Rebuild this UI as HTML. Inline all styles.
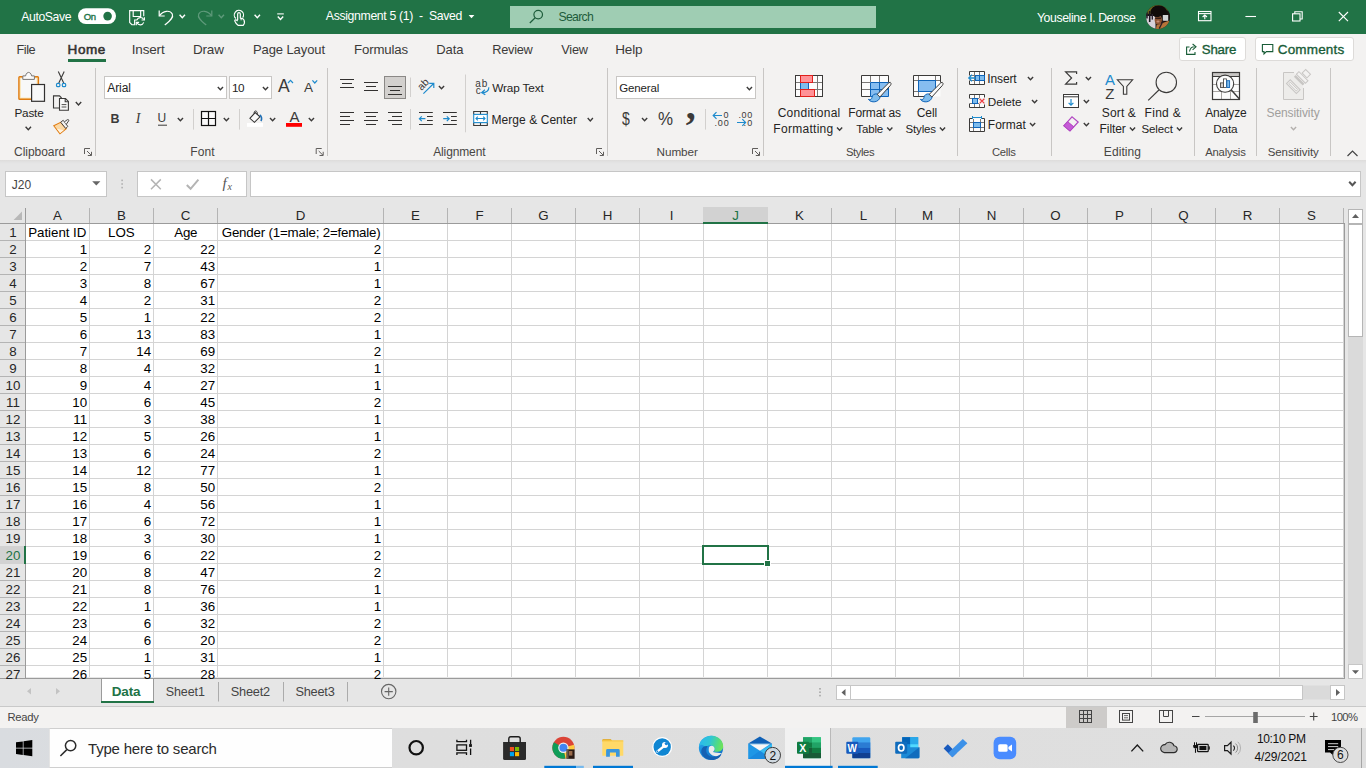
<!DOCTYPE html>
<html><head><meta charset="utf-8"><title>Assignment 5 (1) - Excel</title>
<style>
html,body{margin:0;padding:0;}
body{width:1366px;height:768px;overflow:hidden;position:relative;background:#e6e6e6;font-family:"Liberation Sans",sans-serif;}
.b{position:absolute;display:block;box-sizing:border-box;}
.t{position:absolute;white-space:pre;display:block;}
#ov{position:absolute;left:0;top:0;}
</style></head>
<body>
<div class="b" style="left:0px;top:0px;width:1366px;height:34px;background:#217346;"></div>
<div class="b" style="left:0px;top:34px;width:1366px;height:126px;background:#f3f2f1;"></div>
<div class="b" style="left:68px;top:59px;width:38px;height:3px;background:#217346;"></div>
<div class="b" style="left:1179px;top:37px;width:67px;height:24px;background:#fff;border:1px solid #dddbd9;border-radius:3px;"></div>
<div class="b" style="left:1255px;top:37px;width:99px;height:24px;background:#fff;border:1px solid #dddbd9;border-radius:3px;"></div>
<div class="b" style="left:0px;top:160px;width:1366px;height:4px;background:linear-gradient(#dddcdb,#e2e2e2 50%,#e6e6e6);"></div>
<div class="b" style="left:26px;top:224px;width:1318px;height:453px;background:#fff;"></div>
<div class="b" style="left:0px;top:207px;width:1344px;height:17px;background:#e6e6e6;"></div>
<div class="b" style="left:0px;top:224px;width:25px;height:453px;background:#e6e6e6;"></div>
<div class="b" style="left:1348px;top:224px;width:15px;height:441px;background:#dadada;"></div>
<div class="b" style="left:0px;top:679px;width:1366px;height:27px;background:#e6e6e6;"></div>
<div class="b" style="left:0px;top:706px;width:1366px;height:1px;background:#c9c9c9;"></div>
<div class="b" style="left:0px;top:707px;width:1366px;height:21px;background:#f3f2f1;"></div>
<div class="b" style="left:100.5px;top:677.5px;width:53.5px;height:24px;background:#fff;border-left:1px solid #9b9b9b;border-right:1px solid #9b9b9b;"></div>
<div class="b" style="left:100.5px;top:701px;width:53.5px;height:2px;background:#217346;"></div>
<div class="b" style="left:1066px;top:707px;width:40.5px;height:21px;background:#cdcbc9;"></div>
<div class="b" style="left:0px;top:728px;width:1366px;height:40px;background:linear-gradient(90deg,#d9dce0 0,#dedede 30%,#dfdfdf 100%);"></div>
<div class="b" style="left:49px;top:728px;width:342.5px;height:40px;background:#fefefe;border-top:1px solid #cfcfcf;border-bottom:1px solid #cfcfcf;border-left:1px solid #e4e4e4;"></div>
<div class="b" style="left:785px;top:728px;width:45.5px;height:40px;background:#f1f1f1;"></div>
<div class="b" style="left:830px;top:728px;width:1px;height:40px;background:#b9b9b9;"></div>
<svg id="ov" width="1366" height="768" viewBox="0 0 1366 768">
<rect x="78" y="8.2" width="38" height="15.8" rx="7.9" fill="#fff"/>
<circle cx="107.6" cy="16.1" r="4.3" fill="#217346"/>
<g transform="translate(10,0) scale(0.1098)" fill="none" stroke="#fff" stroke-width="10.5"><path d="M1218 148 V97 H1090 V205 L1110 225 H1140"/><path d="M1122 97 V150 H1190 V97"/><path d="M1135 225 V182 H1158"/><path d="M1156 182 A34 34 0 0 1 1218 178"/><path d="M1224 156 V182 H1198"/><path d="M1218 204 A34 34 0 0 1 1156 208"/><path d="M1150 230 V204 H1176"/></g>
<g fill="none" stroke="#fff" stroke-width="1.2"><path d="M159.2 10.5 V16 H164.7"/><path d="M159.6 15.6 C163 10.5 170 9.8 172.3 14 C174 18 169 21.5 164.8 25"/></g>
<path d="M179.60 14.85 L182.30 17.75 L185.00 14.85" fill="none" stroke="#fff" stroke-width="1.4" stroke-linecap="butt"/>
<g fill="none" stroke="#5f9a7b" stroke-width="1.2"><path d="M211.8 10.5 V16 H206.3"/><path d="M211.4 15.6 C208 10.5 201 9.8 198.7 14 C197 18 202 21.5 206.2 25"/></g>
<path d="M218.60 14.85 L221.30 17.75 L224.00 14.85" fill="none" stroke="#5f9a7b" stroke-width="1.4" stroke-linecap="butt"/>
<g transform="translate(120,0) scale(0.13177)" fill="none" stroke="#fff" stroke-width="9"><path d="M879 140 A35 35 0 1 1 931 134"/><path d="M893 152 V106 A10 10 0 0 1 913 106 V140"/><path d="M913 141 C926 138 936 143 941 152 C947 166 945 181 935 192 H896 C886 185 876 171 872 161 C868 150 880 147 893 159"/><path d="M914 150 H927" stroke-width="6"/></g>
<path d="M254.60 14.85 L257.30 17.75 L260.00 14.85" fill="none" stroke="#fff" stroke-width="1.4" stroke-linecap="butt"/>
<path d="M277.2 13.9 H283.8" stroke="#fff" stroke-width="1.1"/>
<path d="M277.80 16.55 L280.50 19.45 L283.20 16.55" fill="none" stroke="#fff" stroke-width="1.4" stroke-linecap="butt"/>
<path d="M468.6 15 L474.4 15 L471.5 18.2 Z" fill="#fff"/>
<rect x="510" y="6" width="366" height="22" fill="#9fcdb3"/>
<g fill="none" stroke="#1e5c3b" stroke-width="1.2"><circle cx="538.2" cy="14.6" r="4.3"/><path d="M535.2 17.8 L529.8 23"/></g>
<defs><clipPath id="avc"><circle cx="1158" cy="17.05" r="11.9"/></clipPath></defs>
<g clip-path="url(#avc)"><rect x="1145" y="4" width="26" height="26" fill="#17100e"/><path d="M1146 13 A12 12 0 0 1 1168 9 L1166 14 L1149 14 Z" fill="#6f6a20"/><ellipse cx="1158.8" cy="12.4" rx="8.3" ry="7.2" fill="#110b0a"/><rect x="1145" y="16" width="10.5" height="14" fill="#d5d0d8"/><rect x="1145.8" y="12" width="2" height="6.5" fill="#2a222c"/><rect x="1148.9" y="11" width="1.6" height="11" fill="#1f1722"/><rect x="1151.6" y="14" width="1.4" height="5.6" fill="#2a2230"/><rect x="1162.8" y="15" width="6.2" height="5.8" fill="#d4d4d6"/><rect x="1168.2" y="11" width="3" height="11" fill="#1a1412"/><path d="M1161 23.4 L1168.8 20.8 L1171 31 H1155.5 L1156.6 25 Z" fill="#b57339"/><ellipse cx="1158.3" cy="20" rx="3.7" ry="4.8" fill="#8c5333"/><rect x="1155.2" y="17.6" width="5.8" height="1.3" fill="#2f1a14"/><ellipse cx="1158" cy="21.6" rx="1.6" ry="1" fill="#c98a72"/><ellipse cx="1157" cy="15.4" rx="3.2" ry="1.6" fill="#110b0a"/><path d="M1163.2 20.8 L1159.2 28.6" stroke="#2a1c26" stroke-width="1.3"/></g>
<g fill="none" stroke="#fff" stroke-width="1.1"><rect x="1198.5" y="11.5" width="12.5" height="9.2"/><path d="M1198.5 13.6 H1211"/><path d="M1204.8 19.2 V15.4 M1202.6 17 L1204.8 15 L1207 17"/></g>
<path d="M1245.4 16.5 H1256" stroke="#fff" stroke-width="1.1"/>
<g fill="none" stroke="#fff" stroke-width="1.1"><rect x="1292.6" y="13.8" width="7.4" height="7.2"/><path d="M1294.8 13.8 V11.8 H1302.2 V19 H1300"/></g>
<path d="M1338.8 12 L1348 21.2 M1348 12 L1338.8 21.2" stroke="#fff" stroke-width="1.1"/>
<g fill="none" stroke="#185c37" stroke-width="1.1"><path d="M1189.5 47 H1186.6 V54.4 H1195 V52"/><path d="M1189.5 51.5 C1190 48.5 1192 46.8 1194.5 46.8 M1192.6 44 L1196 46.8 L1192.6 49.8"/></g>
<path d="M1262.4 44.5 H1272.8 V51.6 H1266.4 L1264 54 V51.6 H1262.4 Z" fill="none" stroke="#185c37" stroke-width="1.1"/>
<path d="M95.5 68 V156" stroke="#c8c6c4" stroke-width="1"/>
<path d="M327.5 68 V156" stroke="#c8c6c4" stroke-width="1"/>
<path d="M607.5 68 V156" stroke="#c8c6c4" stroke-width="1"/>
<path d="M763.5 68 V156" stroke="#c8c6c4" stroke-width="1"/>
<path d="M957.5 68 V156" stroke="#c8c6c4" stroke-width="1"/>
<path d="M1051.5 68 V156" stroke="#c8c6c4" stroke-width="1"/>
<path d="M1194.5 68 V156" stroke="#c8c6c4" stroke-width="1"/>
<path d="M1256.5 68 V156" stroke="#c8c6c4" stroke-width="1"/>
<path d="M1330.5 68 V156" stroke="#c8c6c4" stroke-width="1"/>
<g fill="none" stroke="#605e5c" stroke-width="1"><path d="M84.5 154 V148.5 H90"/><path d="M87 151 L91.3 155.3 M91.5 151.8 V155.5 H87.8"/></g>
<g fill="none" stroke="#605e5c" stroke-width="1"><path d="M316.2 154 V148.5 H321.7"/><path d="M318.7 151 L323.0 155.3 M323.2 151.8 V155.5 H319.5"/></g>
<g fill="none" stroke="#605e5c" stroke-width="1"><path d="M596.5 154 V148.5 H602"/><path d="M599 151 L603.3 155.3 M603.5 151.8 V155.5 H599.8"/></g>
<g fill="none" stroke="#605e5c" stroke-width="1"><path d="M752.5 154 V148.5 H758"/><path d="M755 151 L759.3 155.3 M759.5 151.8 V155.5 H755.8"/></g>
<path d="M1347.5 156 L1352.5 151 L1357.5 156" fill="none" stroke="#444" stroke-width="1.2"/>
<rect x="18.9" y="76.7" width="19.5" height="22.6" rx="0.8" fill="#fbe3ae" stroke="#e07c12" stroke-width="1.4"/><rect x="20.8" y="78.4" width="15.8" height="19.2" fill="#f8f8f8"/>
<path d="M22.8 79.4 V75.9 H25.6 C26 73 28 72.4 28.6 72.4 C29.2 72.4 31.2 73 31.6 75.9 H34.4 V79.4 Z" fill="#fafafa" stroke="#797775" stroke-width="1"/>
<rect x="31.6" y="84.5" width="12.9" height="16.8" fill="#f8f8f8" stroke="#323130" stroke-width="1.2"/>
<path d="M25.60 126.75 L28.30 129.65 L31.00 126.75" fill="none" stroke="#3b3a39" stroke-width="1.4" stroke-linecap="butt"/>
<g fill="none"><path d="M58.3 71.6 L63.7 83 M64.2 71.6 L58.8 83" stroke="#3b3a39" stroke-width="1.1"/><rect x="56.5" y="83.4" width="3.4" height="3.3" rx="1.3" stroke="#1e8bcd" stroke-width="1.2"/><rect x="62.3" y="83.4" width="3.4" height="3.3" rx="1.3" stroke="#1e8bcd" stroke-width="1.2"/></g>
<g fill="none" stroke="#3b3a39" stroke-width="1.1"><path d="M59.4 108 H53.5 V95.9 H59.5 L61.6 98"/><path d="M59.5 98.5 H65.5 L68.4 101.4 V110.3 H59.5 Z" fill="#f8f8f8"/><path d="M65.2 98.7 V101.7 H68.2"/><path d="M61.6 104.6 H66.4 M61.6 107 H66.4" stroke-width="0.9"/></g>
<path d="M75.80 102.05 L78.50 104.95 L81.20 102.05" fill="none" stroke="#3b3a39" stroke-width="1.4" stroke-linecap="butt"/>
<g transform="translate(10,66) scale(0.09112)"><path d="M480 655 L556 618 L618 688 L548 745 Z" fill="#fbd9a5" stroke="#e07c12" stroke-width="11"/><path d="M515 688 L590 704 L550 735 Z" fill="#fdf3e2"/><path d="M556 617 L584 596 L634 662 L612 686 Z" fill="#f3f2f1" stroke="#3b3a39" stroke-width="10"/><path d="M598 612 L630 589 Q646 584 645 600 L618 640" fill="#f3f2f1" stroke="#3b3a39" stroke-width="10"/></g>
<rect x="104.5" y="76.5" width="122" height="22" fill="#fff" stroke="#c8c6c4" stroke-width="1"/>
<rect x="229.5" y="76.5" width="42" height="22" fill="#fff" stroke="#c8c6c4" stroke-width="1"/>
<path d="M217.80 87.00 L220.40 89.80 L223.00 87.00" fill="none" stroke="#3b3a39" stroke-width="1.4" stroke-linecap="butt"/>
<path d="M262.90 87.00 L265.50 89.80 L268.10 87.00" fill="none" stroke="#3b3a39" stroke-width="1.4" stroke-linecap="butt"/>
<path d="M288 83 L290.5 80.4 L293 83" fill="none" stroke="#1e8bcd" stroke-width="1.2"/>
<path d="M312.4 80.4 L314.8 83 L317.2 80.4" fill="none" stroke="#1e8bcd" stroke-width="1.2"/>
<path d="M158 125.2 H167" stroke="#3b3a39" stroke-width="1"/>
<path d="M177.80 117.90 L180.40 120.70 L183.00 117.90" fill="none" stroke="#3b3a39" stroke-width="1.4" stroke-linecap="butt"/>
<path d="M193.5 109 V129.6" stroke="#d2d0ce" stroke-width="1"/>
<g fill="none" stroke="#111" stroke-width="1.2"><rect x="201.5" y="111.5" width="14" height="14" fill="#fafafa"/><path d="M208.5 111.5 V125.5 M201.5 118.5 H215.5"/></g>
<path d="M223.80 117.90 L226.40 120.70 L229.00 117.90" fill="none" stroke="#3b3a39" stroke-width="1.4" stroke-linecap="butt"/>
<path d="M239.5 109 V129.6" stroke="#d2d0ce" stroke-width="1"/>
<g transform="translate(196,104) scale(0.09517)"><path d="M566 150 L622 90 L672 134 L614 192 Z" fill="#fafafa" stroke="#323130" stroke-width="11"/><path d="M612 104 C606 78 622 68 634 76 C644 82 646 96 644 108" fill="none" stroke="#323130" stroke-width="10"/><path d="M670 116 C692 130 694 160 682 178" fill="none" stroke="#1f6fb5" stroke-width="17"/></g>
<rect x="247" y="123" width="16" height="3.8" fill="#ffffff"/>
<path d="M270.00 117.90 L272.60 120.70 L275.20 117.90" fill="none" stroke="#3b3a39" stroke-width="1.4" stroke-linecap="butt"/>
<rect x="286" y="123" width="16" height="3.8" fill="#ff0000"/>
<path d="M308.80 117.90 L311.40 120.70 L314.00 117.90" fill="none" stroke="#3b3a39" stroke-width="1.4" stroke-linecap="butt"/>
<path d="M340.0 79.5 H354.0 M342.0 83.5 H352.0 M340.0 87.5 H354.0 " stroke="#323130" stroke-width="1" fill="none"/>
<path d="M364.0 82.5 H378.0 M366.0 86.5 H376.0 M364.0 90.5 H378.0 " stroke="#323130" stroke-width="1" fill="none"/>
<rect x="384.5" y="76.5" width="21" height="22" fill="#d2d0ce" stroke="#8a8886" stroke-width="1"/>
<path d="M388.0 86.5 H402.0 M390.0 90.5 H400.0 M388.0 94.5 H402.0 " stroke="#323130" stroke-width="1" fill="none"/>
<path d="M410.5 77.5 V97" stroke="#d2d0ce" stroke-width="1"/>
<g><text x="0" y="0" transform="translate(421.4,91) rotate(-45)" font-size="10.5" fill="#3b3a39" font-family="Liberation Sans, sans-serif">ab</text><path d="M423.4 93.6 L433.4 83.8 M429.2 83.4 H433.8 V88" fill="none" stroke="#1e8bcd" stroke-width="1.2"/></g>
<path d="M438.90 86.00 L441.50 88.80 L444.10 86.00" fill="none" stroke="#3b3a39" stroke-width="1.4" stroke-linecap="butt"/>
<path d="M465.5 74.5 V132.3" stroke="#d2d0ce" stroke-width="1"/>
<path d="M340.0 112.5 H354.0 M340.0 116.5 H350.0 M340.0 120.5 H354.0 M340.0 124.5 H350.0 " stroke="#323130" stroke-width="1" fill="none"/>
<path d="M364.0 112.5 H378.0 M366.0 116.5 H376.0 M364.0 120.5 H378.0 M366.0 124.5 H376.0 " stroke="#323130" stroke-width="1" fill="none"/>
<path d="M388.0 112.5 H402.0 M392.0 116.5 H402.0 M388.0 120.5 H402.0 M392.0 124.5 H402.0 " stroke="#323130" stroke-width="1" fill="none"/>
<path d="M410.5 109 V129.6" stroke="#d2d0ce" stroke-width="1"/>
<path d="M419.0 112.5 H432.8 M427.0 116.5 H432.8 M427.0 120.5 H432.8 M419.0 124.5 H432.8 " stroke="#323130" stroke-width="1" fill="none"/>
<path d="M419.4 118.7 H425.4 M421.8 116.3 L419.4 118.7 L421.8 121.1" fill="none" stroke="#1e8bcd" stroke-width="1.2"/>
<path d="M443.0 112.5 H456.8 M451.0 116.5 H456.8 M451.0 120.5 H456.8 M443.0 124.5 H456.8 " stroke="#323130" stroke-width="1" fill="none"/>
<path d="M443.2 118.7 H449.2 M446.8 116.3 L449.2 118.7 L446.8 121.1" fill="none" stroke="#1e8bcd" stroke-width="1.2"/>
<path d="M488.8 87.3 C489.2 90.6 486.2 92.5 482 92.6 M484.9 89.8 L481.7 92.6 L485.3 94.8" fill="none" stroke="#1e8bcd" stroke-width="1.2"/>
<g fill="none" stroke-width="1.1"><path d="M473.7 114.4 V111.5 H487.3 V114.4 M480.5 111.5 V114.4 M473.7 122.6 V125.5 H487.3 V122.6 M480.5 122.6 V125.5" stroke="#3b3a39"/><rect x="473.7" y="114.4" width="13.6" height="8.2" stroke="#1e8bcd" fill="#fff"/><path d="M476 118.5 H485 M477.8 116.7 L476 118.5 L477.8 120.3 M483.2 116.7 L485 118.5 L483.2 120.3" stroke="#1e8bcd"/></g>
<path d="M587.70 118.10 L590.30 120.90 L592.90 118.10" fill="none" stroke="#3b3a39" stroke-width="1.4" stroke-linecap="butt"/>
<rect x="616.5" y="76.5" width="139" height="22" fill="#fff" stroke="#c8c6c4" stroke-width="1"/>
<path d="M746.80 87.00 L749.40 89.80 L752.00 87.00" fill="none" stroke="#3b3a39" stroke-width="1.4" stroke-linecap="butt"/>
<path d="M642.00 117.90 L644.60 120.70 L647.20 117.90" fill="none" stroke="#3b3a39" stroke-width="1.4" stroke-linecap="butt"/>
<path d="M705.5 109 V129.6" stroke="#d2d0ce" stroke-width="1"/>
<path d="M713.2 115.5 H722 M716.5 112.2 L713.2 115.5 L716.5 118.8" fill="none" stroke="#1e8bcd" stroke-width="1.2"/>
<path d="M737 122.5 H745.6 M742.3 119.2 L745.6 122.5 L742.3 125.8" fill="none" stroke="#1e8bcd" stroke-width="1.2"/>
<rect x="795.5" y="75.5" width="27" height="21" fill="#fcfcfc"/><path d="M796 82.5 H822 M796 89.5 H822 M817.5 76 V96" stroke="#7a7876" stroke-width="1" fill="none"/><rect x="795.5" y="75.5" width="27" height="21" fill="none" stroke="#3b3a39" stroke-width="1"/><rect x="800.5" y="82.5" width="8" height="7" fill="#7fbcec" stroke="#0f64b9" stroke-width="1"/><rect x="800.5" y="75.5" width="12" height="7" fill="#ff9297" stroke="#e0201c" stroke-width="1"/><rect x="800.5" y="89.5" width="14" height="7" fill="#ff9297" stroke="#e0201c" stroke-width="1"/>
<path d="M837.00 127.40 L839.60 130.20 L842.20 127.40" fill="none" stroke="#3b3a39" stroke-width="1.4" stroke-linecap="butt"/>
<rect x="861.5" y="75.5" width="27" height="21" fill="#fcfcfc"/><rect x="870.5" y="82.5" width="18" height="14" fill="#86bdf0"/><path d="M862 82.5 H870 M862 89.5 H870 M870.5 76 V82 M879.5 76 V82" stroke="#7a7876" stroke-width="1" fill="none"/><path d="M888.5 82.5 V75.5 H861.5 V96.5 H870.5" stroke="#3b3a39" stroke-width="1" fill="none"/><path d="M870.5 82.5 H888.5 V96.5 H870.5 Z M879.5 82.5 V96.5 M870.5 89.5 H888.5" fill="none" stroke="#0f64b9" stroke-width="1"/><path d="M868.4 99.4 C871.0 103.2 879.2 102.8 880.2 96.6 L877.4 94 C874.2 93.4 872.2 95.2 872.0 97.4 C871.8 99.4 870.4 100 868.4 99.4 Z" fill="#7fbcec" stroke="#0f64b9" stroke-width="1"/><path d="M877.2 94.4 L888.8 82.8 Q890.6 81.6 891.0 83.4 Q891.0 84.6 890.4 85.4 L879.9 97 Z" fill="#fafafa" stroke="#3b3a39" stroke-width="1"/>
<path d="M887.20 127.40 L889.80 130.20 L892.40 127.40" fill="none" stroke="#3b3a39" stroke-width="1.4" stroke-linecap="butt"/>
<rect x="913.5" y="75.5" width="27" height="21" fill="#fcfcfc"/><path d="M914 80.5 H940 M914 91.5 H918 M918.5 76 V96 M935.5 76 V80" stroke="#7a7876" stroke-width="1" fill="none"/><path d="M940.5 82.5 V75.5 H913.5 V96.5 H924" stroke="#3b3a39" stroke-width="1" fill="none"/><rect x="918.5" y="80.5" width="17" height="11" fill="#86bdf0" stroke="#0f64b9" stroke-width="1"/><path d="M920.4 99.4 C923.0 103.2 931.2 102.8 932.2 96.6 L929.4 94 C926.2 93.4 924.2 95.2 924.0 97.4 C923.8 99.4 922.4 100 920.4 99.4 Z" fill="#7fbcec" stroke="#0f64b9" stroke-width="1"/><path d="M929.2 94.4 L940.8 82.8 Q942.6 81.6 943.0 83.4 Q943.0 84.6 942.4 85.4 L931.9 97 Z" fill="#fafafa" stroke="#3b3a39" stroke-width="1"/>
<path d="M939.90 127.40 L942.50 130.20 L945.10 127.40" fill="none" stroke="#3b3a39" stroke-width="1.4" stroke-linecap="butt"/>
<rect x="969.5" y="71.5" width="15" height="13" fill="#fcfcfc"/><path d="M970 75.5 H984 M970 80.5 H984 M974.5 72 V84 M979.5 72 V84" stroke="#7a7876" stroke-width="1" fill="none"/><path d="M969.5 75.5 V71.5 H984.5 V84.5 H969.5 V80.5" stroke="#3b3a39" stroke-width="1" fill="none"/><rect x="975.5" y="75.5" width="9" height="5" fill="#7fbcec" stroke="#0f64b9" stroke-width="1"/><path d="M979.5 75.5 V80.5" stroke="#0f64b9" stroke-width="1"/><path d="M968.8 78 H975.5 M972 74.8 L968.8 78 L972 81.2" fill="none" stroke="#1e8bcd" stroke-width="1.3"/>
<path d="M1027.90 77.00 L1030.50 79.80 L1033.10 77.00" fill="none" stroke="#3b3a39" stroke-width="1.4" stroke-linecap="butt"/>
<rect x="969.5" y="94.5" width="15" height="13" fill="#fcfcfc"/><path d="M970 98.5 H979 M970 103.5 H979 M974.5 95 V107 M979.5 95 V98 M979.5 104 V107" stroke="#7a7876" stroke-width="1" fill="none"/><path d="M969.5 98.5 V94.5 H984.5 V97.5 M984.5 104.5 V107.5 H969.5 V103.5" stroke="#3b3a39" stroke-width="1" fill="none"/><rect x="979" y="98" width="7" height="6" fill="#f3f2f1"/><rect x="972.5" y="98.5" width="5" height="5" fill="#7fbcec" stroke="#0f64b9" stroke-width="1"/><path d="M979.6 98.8 L984.4 103.4 M984.4 98.8 L979.6 103.4" stroke="#ee3d43" stroke-width="1.2"/>
<path d="M1032.00 99.90 L1034.60 102.70 L1037.20 99.90" fill="none" stroke="#3b3a39" stroke-width="1.4" stroke-linecap="butt"/>
<rect x="969.5" y="118.5" width="15" height="13" fill="#fcfcfc"/><path d="M970 122.5 H984 M970 127.5 H984 M973.5 119 V131 M980.5 119 V131" stroke="#7a7876" stroke-width="1" fill="none"/><path d="M972 118.5 H969.5 V131.5 H984.5 V118.5 H982" stroke="#3b3a39" stroke-width="1" fill="none"/><rect x="973.5" y="122.5" width="7" height="5" fill="#7fbcec" stroke="#0f64b9" stroke-width="1"/><path d="M972.5 117.5 H981.5 M972.5 116 V119 M981.5 116 V119" stroke="#1e8bcd" stroke-width="1" fill="none"/>
<path d="M1030.00 123.00 L1032.60 125.80 L1035.20 123.00" fill="none" stroke="#3b3a39" stroke-width="1.4" stroke-linecap="butt"/>
<path d="M1076.6 74 V71.8 H1065.6 L1071.6 78 L1065.6 84.2 H1076.6 V82" fill="none" stroke="#3b3a39" stroke-width="1.2"/>
<path d="M1085.80 77.00 L1088.40 79.80 L1091.00 77.00" fill="none" stroke="#3b3a39" stroke-width="1.4" stroke-linecap="butt"/>
<rect x="1063.5" y="94.5" width="15" height="13" fill="#fff" stroke="#3b3a39" stroke-width="1"/><path d="M1063.5 96.8 H1078.5" stroke="#3b3a39" stroke-width="1"/><path d="M1071 99 V105 M1068.6 102.8 L1071 105.2 L1073.4 102.8" fill="none" stroke="#1e8bcd" stroke-width="1.2"/>
<path d="M1083.80 99.90 L1086.40 102.70 L1089.00 99.90" fill="none" stroke="#3b3a39" stroke-width="1.4" stroke-linecap="butt"/>
<path d="M1063.8 125.8 L1072 116.8 L1078.2 122 L1070 131 Z" fill="#f3f2f1" stroke="#b146c2" stroke-width="1.2"/><path d="M1063.8 125.8 L1067.6 121.6 L1073.8 126.8 L1070 131 Z" fill="#c55bd6" stroke="#b146c2" stroke-width="1"/>
<path d="M1083.80 123.00 L1086.40 125.80 L1089.00 123.00" fill="none" stroke="#3b3a39" stroke-width="1.4" stroke-linecap="butt"/>
<path d="M1117.4 79.8 H1132.6 L1126.8 86.4 V94.2 H1123.4 V86.4 Z" fill="none" stroke="#3b3a39" stroke-width="1.1"/>
<path d="M1129.90 127.40 L1132.50 130.20 L1135.10 127.40" fill="none" stroke="#3b3a39" stroke-width="1.4" stroke-linecap="butt"/>
<circle cx="1166.3" cy="82.4" r="10.2" fill="none" stroke="#3b3a39" stroke-width="1.1"/><path d="M1158.9 90 L1148.2 100.4" stroke="#3b3a39" stroke-width="1.1"/>
<path d="M1176.90 127.40 L1179.50 130.20 L1182.10 127.40" fill="none" stroke="#3b3a39" stroke-width="1.4" stroke-linecap="butt"/>
<rect x="1212.5" y="72.5" width="27" height="27" fill="#fcfcfc"/><rect x="1213" y="73" width="26" height="3.5" fill="#c8c6c4"/><path d="M1213 84.5 H1239 M1213 91.5 H1239 M1221.5 77 V99 M1230.5 77 V99" stroke="#a9a6a3" stroke-width="1" fill="none"/><path d="M1212.5 76.5 H1239.5" stroke="#3b3a39" stroke-width="1"/><rect x="1212.5" y="72.5" width="27" height="27" fill="none" stroke="#3b3a39" stroke-width="1.2"/><circle cx="1225.1" cy="83.7" r="8.6" fill="#fcfcfc" stroke="#3b3a39" stroke-width="1.1"/><path d="M1231.3 90 L1239.2 98.8" stroke="#3b3a39" stroke-width="1.4"/><rect x="1220.5" y="82.9" width="3" height="4.6" fill="#d2d0ce" stroke="#3b3a39" stroke-width="0.8"/><rect x="1223.5" y="78.9" width="3" height="8.6" fill="#fff" stroke="#3b3a39" stroke-width="0.8"/><rect x="1226.8" y="80.7" width="2.8" height="6.8" fill="#7fbcec" stroke="#0f64b9" stroke-width="0.9"/>
<path d="M1294 72.5 H1283.5 V99.5 H1303.5 V88 Z" fill="#edecea"/><path d="M1294 72.5 H1283.5 V99.5 H1303.5 V88" fill="none" stroke="#c8c6c4" stroke-width="1"/><g transform="translate(1293.3,86.6) rotate(-45)"><rect x="-2.7" y="-7" width="5.4" height="14" fill="#edecea" stroke="#c8c6c4" stroke-width="1"/><rect x="-1" y="-5.2" width="2" height="10.4" fill="#f3f2f1" stroke="#c8c6c4" stroke-width="0.9"/></g><g transform="translate(1299.2,80.2) rotate(-45)"><rect x="-1.3" y="-6.2" width="2.6" height="12.4" fill="#c8c6c4"/></g><g transform="translate(1302.2,77.4) rotate(-45)"><rect x="-1.8" y="-6.4" width="3.6" height="12.8" fill="#f3f2f1" stroke="#c8c6c4" stroke-width="1"/></g><g transform="translate(1306.4,73.6) rotate(-45)"><rect x="-2.6" y="-3.4" width="5" height="6.8" fill="#f3f2f1" stroke="#c8c6c4" stroke-width="1"/></g>
<path d="M1290.90 127.00 L1293.50 129.80 L1296.10 127.00" fill="none" stroke="#b3b0ad" stroke-width="1.4" stroke-linecap="butt"/>
<rect x="5.5" y="171.5" width="101" height="25" fill="#fff" stroke="#c6c6c6" stroke-width="1"/>
<path d="M92.2 181.2 H100.4 L96.3 185.4 Z" fill="#666"/>
<g fill="#aaa"><rect x="121.4" y="179.6" width="1.4" height="1.6"/><rect x="121.4" y="183.2" width="1.4" height="1.6"/><rect x="121.4" y="186.8" width="1.4" height="1.6"/></g>
<rect x="137.5" y="171.5" width="109" height="25" fill="#fff" stroke="#c6c6c6" stroke-width="1"/>
<path d="M151 179.4 L160.8 189.2 M160.8 179.4 L151 189.2" stroke="#b4b4b4" stroke-width="1.5"/>
<path d="M186.8 185 L190.6 188.8 L198.4 179.6" fill="none" stroke="#b4b4b4" stroke-width="2"/>
<rect x="250.5" y="171.5" width="1110" height="25" fill="#fff" stroke="#c6c6c6" stroke-width="1"/>
<path d="M1349.2 181.8 L1352.4 185.2 L1355.6 181.8" fill="none" stroke="#555" stroke-width="2"/>
<path d="M89.5 224 V677 M153.5 224 V677 M217.5 224 V677 M383.5 224 V677 M447.5 224 V677 M511.5 224 V677 M575.5 224 V677 M639.5 224 V677 M703.5 224 V677 M767.5 224 V677 M831.5 224 V677 M895.5 224 V677 M959.5 224 V677 M1023.5 224 V677 M1087.5 224 V677 M1151.5 224 V677 M1215.5 224 V677 M1279.5 224 V677 M1343.5 224 V677 M26 240.5 H1344 M26 257.5 H1344 M26 274.5 H1344 M26 291.5 H1344 M26 308.5 H1344 M26 325.5 H1344 M26 342.5 H1344 M26 359.5 H1344 M26 376.5 H1344 M26 393.5 H1344 M26 410.5 H1344 M26 427.5 H1344 M26 444.5 H1344 M26 461.5 H1344 M26 478.5 H1344 M26 495.5 H1344 M26 512.5 H1344 M26 529.5 H1344 M26 546.5 H1344 M26 563.5 H1344 M26 580.5 H1344 M26 597.5 H1344 M26 614.5 H1344 M26 631.5 H1344 M26 648.5 H1344 M26 665.5 H1344 " stroke="#d4d4d4" stroke-width="1" fill="none"/>
<path d="M89.5 208 V223 M153.5 208 V223 M217.5 208 V223 M383.5 208 V223 M447.5 208 V223 M511.5 208 V223 M575.5 208 V223 M639.5 208 V223 M703.5 208 V223 M767.5 208 V223 M831.5 208 V223 M895.5 208 V223 M959.5 208 V223 M1023.5 208 V223 M1087.5 208 V223 M1151.5 208 V223 M1215.5 208 V223 M1279.5 208 V223 M1343.5 208 V223 " stroke="#b4b4b4" stroke-width="1" fill="none"/>
<path d="M0 240.5 H25 M0 257.5 H25 M0 274.5 H25 M0 291.5 H25 M0 308.5 H25 M0 325.5 H25 M0 342.5 H25 M0 359.5 H25 M0 376.5 H25 M0 393.5 H25 M0 410.5 H25 M0 427.5 H25 M0 444.5 H25 M0 461.5 H25 M0 478.5 H25 M0 495.5 H25 M0 512.5 H25 M0 529.5 H25 M0 546.5 H25 M0 563.5 H25 M0 580.5 H25 M0 597.5 H25 M0 614.5 H25 M0 631.5 H25 M0 648.5 H25 M0 665.5 H25 " stroke="#b4b4b4" stroke-width="1" fill="none"/>
<path d="M0 223.5 H1345 M25.5 208 V678" stroke="#9b9b9b" stroke-width="1" fill="none"/>
<path d="M22 211.4 V220 H13.6 Z" fill="#b8b8b8"/>
<rect x="703" y="207" width="65" height="15" fill="#d2d2d2"/><rect x="703" y="222" width="65" height="2" fill="#217346"/>
<rect x="0" y="546" width="24" height="18" fill="#d2d2d2"/><rect x="24" y="546" width="2" height="18" fill="#217346"/>
<rect x="703" y="546" width="65" height="18" fill="none" stroke="#217346" stroke-width="2"/>
<rect x="764.5" y="560.5" width="6" height="6" fill="#217346" stroke="#fff" stroke-width="1"/>
<rect x="1348.5" y="209.5" width="14" height="14" fill="#fff" stroke="#b5b5b5"/><path d="M1352 218 H1359 L1355.5 214 Z" fill="#606060"/>
<rect x="1348.5" y="224.5" width="14" height="112" fill="#fff" stroke="#b5b5b5"/>
<rect x="1348.5" y="664.5" width="14" height="14" fill="#fff" stroke="#c6c6c6"/><path d="M1352 670.2 H1359 L1355.5 674 Z" fill="#606060"/>
<path d="M0 678.5 H1345 M1344.5 223 V679" stroke="#9b9b9b" stroke-width="1" fill="none"/>
<path d="M218.5 682 V701.5 M283.5 682 V701.5 M347.5 682 V701.5" stroke="#ababab" stroke-width="1"/>
<path d="M31 688 V694.6 L27 691.3 Z M56 688 V694.6 L60 691.3 Z" fill="#c3c3c3"/>
<g fill="none" stroke="#666" stroke-width="1.1"><circle cx="388.7" cy="691.6" r="7.2"/><path d="M384.6 691.6 H392.8 M388.7 687.5 V695.7"/></g>
<g fill="#a6a6a6"><rect x="819.2" y="688" width="1.6" height="1.6"/><rect x="819.2" y="691.4" width="1.6" height="1.6"/><rect x="819.2" y="694.8" width="1.6" height="1.6"/></g>
<rect x="836.5" y="685.5" width="14" height="14" fill="#fff" stroke="#c6c6c6"/><path d="M845.5 689 V696 L841.5 692.5 Z" fill="#606060"/>
<rect x="850.5" y="685.5" width="480" height="14" fill="#dadada"/>
<rect x="850.5" y="685.5" width="452" height="14" fill="#fff" stroke="#c6c6c6"/>
<rect x="1330.5" y="685.5" width="14" height="14" fill="#fff" stroke="#c6c6c6"/><path d="M1336 689 V696 L1340 692.5 Z" fill="#606060"/>
<g fill="none" stroke="#444" stroke-width="1"><rect x="1079.5" y="710.5" width="12" height="12"/><path d="M1083.5 710.5 V722.5 M1087.5 710.5 V722.5 M1079.5 714.5 H1091.5 M1079.5 718.5 H1091.5"/></g>
<g fill="none" stroke="#444" stroke-width="1"><rect x="1119.5" y="710.5" width="13" height="12"/><rect x="1122.5" y="713.5" width="7" height="6.6"/><path d="M1124 715.6 H1128 M1124 717.8 H1128" stroke-width="0.8"/></g>
<g fill="none" stroke="#444" stroke-width="1"><rect x="1159.5" y="710.5" width="13" height="12"/><path d="M1163.5 710.5 V716.5 H1168.5 V710.5"/></g>
<path d="M1192 716.5 H1199.5 M1309.8 716.5 H1317.6 M1313.7 712.6 V720.4" stroke="#444" stroke-width="1.1"/>
<path d="M1205 716.5 H1305" stroke="#a6a6a6" stroke-width="1"/>
<rect x="1253.2" y="712" width="4.6" height="11" fill="#6b6b6b"/>
<path d="M16 742.3 L22.8 741.4 V747.8 H16 Z M23.5 741.3 L32.3 740 V747.8 H23.5 Z M16 748.5 H22.8 V754.9 L16 754 Z M23.5 748.5 H32.3 V756.3 L23.5 755 Z" fill="#000"/>
<g fill="none" stroke="#2b2b2b" stroke-width="1.5"><circle cx="70.6" cy="745.6" r="5.2"/><path d="M66.8 749.6 L60.4 756"/></g>
<circle cx="416.2" cy="747.7" r="6.7" fill="none" stroke="#111" stroke-width="2.2"/>
<g fill="none" stroke="#111" stroke-width="1.3"><rect x="456.9" y="744.9" width="9.6" height="5.4"/><path d="M456.9 739.8 V741.7 H466.5 V739.8 M456.9 755 V752.9 H466.5 V755 M470.6 739.8 V744 M470.6 748.6 V755"/><rect x="469.1" y="744.1" width="2.8" height="2.8" fill="#111" stroke="none"/></g>
<path d="M503.1 742.1 H526 V758.4 Q526 759.9 524.5 759.9 H504.6 Q503.1 759.9 503.1 758.4 Z" fill="#2b2b2b"/><path d="M508.8 742.4 V738.8 Q508.8 736.8 510.8 736.8 H518.2 Q520.2 736.8 520.2 738.8 V742.4" fill="none" stroke="#1b1b1b" stroke-width="1.4"/>
<rect x="509.9" y="747" width="4.1" height="4.1" fill="#f25022"/><rect x="515" y="747" width="4.1" height="4.1" fill="#7fba00"/><rect x="509.9" y="752.1" width="4.1" height="4.1" fill="#00a4ef"/><rect x="515" y="752.1" width="4.1" height="4.1" fill="#ffb900"/>
<g><circle cx="563.4" cy="747.7" r="11" fill="#db4437"/><path d="M563.4 747.7 L553.87 742.2 A11 11 0 0 0 565.6 758.48 Z" fill="#0f9d58"/><path d="M563.4 747.7 L574.4 747.5 A11 11 0 0 1 565.6 758.48 Z" fill="#ffcd40"/><path d="M563.4 747.7 L574.0 744.7 L574.4 748.1 Z" fill="#ffcd40"/><circle cx="563.4" cy="747.7" r="5.2" fill="#f1f1f1"/><circle cx="563.4" cy="747.7" r="4" fill="#4285f4"/></g>
<rect x="566.6" y="749.4" width="8" height="9.4" fill="#2a1a14"/><rect x="569" y="751" width="3.4" height="4.6" fill="#9a6a4a"/><rect x="566.6" y="749.4" width="2" height="9.4" fill="#6a5a50"/>
<rect x="544.3" y="765.8" width="31.7" height="2.2" fill="#0078d4"/><rect x="576" y="765.8" width="7.8" height="2.2" fill="#76b9ed"/>
<path d="M602.3 741.4 V739.9 Q602.3 739.2 603 739.2 H610.8 L612 740.4 V741.4 Z" fill="#e3a30a"/><rect x="602.3" y="740.4" width="21" height="15.4" rx="0.6" fill="#ffd968"/><rect x="602.3" y="740.4" width="21" height="1" fill="#f6c644"/><path d="M606.1 756.8 V750.4 Q606.1 749 607.5 749 H618.3 Q619.7 749 619.7 750.4 V756.8 H616 V752.5 H609.9 V756.8 Z" fill="#3a96dd"/>
<rect x="593" y="765.8" width="40" height="2.2" fill="#0078d4"/>
<circle cx="662.2" cy="747" r="10" fill="#fff"/><circle cx="662.2" cy="747" r="8.7" fill="#0f86d2"/>
<path d="M657.2 751.6 L663.4 746.6" stroke="#fff" stroke-width="2.4" stroke-linecap="round"/><circle cx="665" cy="745" r="3" fill="#fff"/><circle cx="666.4" cy="743.6" r="1.7" fill="#1a86d8"/><circle cx="657.4" cy="751.4" r="0.9" fill="#1a86d8"/>
<defs><linearGradient id="eg1" x1="0" y1="0" x2="0.6" y2="1"><stop offset="0" stop-color="#2fb4ee"/><stop offset="0.5" stop-color="#1b8fde"/><stop offset="1" stop-color="#1274c9"/></linearGradient><linearGradient id="eg2" x1="0" y1="0.3" x2="1" y2="0.5"><stop offset="0" stop-color="#2bb9ee"/><stop offset="0.45" stop-color="#30c6d2"/><stop offset="0.8" stop-color="#55dc7c"/><stop offset="1" stop-color="#6fe25a"/></linearGradient></defs>
<g transform="translate(690,730) scale(0.07321)"><circle cx="287" cy="244" r="166" fill="url(#eg1)"/><path d="M122 225 C140 125 225 76 300 79 C400 84 458 160 453 228 C450 282 400 306 328 296 C346 270 340 230 300 212 C262 198 228 214 208 238 C182 196 148 192 122 225 Z" fill="url(#eg2)"/><path d="M256 258 C254 218 300 204 326 230 C346 254 336 284 314 300 C350 314 400 308 434 316 C424 336 412 348 396 357 C350 368 290 352 266 312 C256 292 254 274 256 258 Z" fill="#ebebeb"/><path d="M240 222 C214 262 216 312 252 346 C292 384 372 374 428 322 C424 366 382 402 320 409 C250 414 186 384 160 326 C142 280 166 208 240 222 Z" fill="#1561b3"/></g>
<g transform="translate(690,730) scale(0.07321)"><rect x="795" y="185" width="325" height="210" fill="#1f97e6"/><path d="M955 285 L1120 190 V395 H1040 Z" fill="#35bdf3"/><path d="M795 395 L955 285 L1120 395 Z" fill="#1a8ade"/><path d="M795 186 L955 90 L1120 186 Z" fill="#0f60b6"/><path d="M818 196 H1092 L955 284 Z" fill="#f6f6f6"/></g>
<circle cx="772.7" cy="755.2" r="7.8" fill="#cfd8df" stroke="#3a3a3a" stroke-width="1"/>
<rect x="785" y="765.8" width="47.6" height="2.2" fill="#0078d4"/>
<rect x="803" y="737.2" width="18" height="21" rx="1.2" fill="#33c481"/><rect x="803" y="737.2" width="9" height="5.25" fill="#21a366"/><rect x="812" y="737.2" width="9" height="5.25" fill="#33c481"/><rect x="803" y="742.45" width="9" height="5.25" fill="#107c41"/><rect x="812" y="742.45" width="9" height="5.25" fill="#21a366"/><rect x="803" y="747.7" width="9" height="5.25" fill="#185c37"/><rect x="812" y="747.7" width="9" height="5.25" fill="#107c41"/><rect x="803" y="752.95" width="18" height="5.25" fill="#185c37"/><rect x="797" y="741.8000000000001" width="12" height="12" rx="1" fill="#107c41"/>
<rect x="838" y="765.8" width="39.7" height="2.2" fill="#0078d4"/>
<rect x="852.3" y="737.2" width="18" height="21" rx="1.2" fill="#41a5ee"/><rect x="852.3" y="742.45" width="18" height="5.25" fill="#2b7cd3"/><rect x="852.3" y="747.7" width="18" height="5.25" fill="#185abd"/><rect x="852.3" y="752.95" width="18" height="5.25" fill="#103f91"/><rect x="846.3" y="741.8000000000001" width="12" height="12" rx="1" fill="#185abd"/>
<rect x="902.2" y="737.2" width="16" height="14" fill="#1490df"/><rect x="902.2" y="737.2" width="8" height="7" fill="#0364b8"/><rect x="910.2" y="737.2" width="8" height="7" fill="#28a8ea"/><rect x="910.2" y="744.2" width="8" height="7" fill="#50d9ff"/><path d="M901.2 747.2 L919.4000000000001 747.2 V757.2 Q919.4000000000001 758.2 918.2 758.2 H901.2 Z" fill="#1b8ad6"/><path d="M919.4000000000001 747.2 L905.2 758.2 H918.2 Q919.4000000000001 758.2 919.4000000000001 757.2 Z" fill="#0f6cbd"/><rect x="895.2" y="741.8000000000001" width="12" height="12" rx="1" fill="#0f6cbd"/>
<ellipse cx="901.2" cy="747.8000000000001" rx="2.7" ry="3.2" fill="none" stroke="#fff" stroke-width="1.7"/>
<path d="M943.6 748.4 L947.8 744.2 L956.6 753 L952.4 757.2 Z" fill="#195abd"/><path d="M952.4 757.2 L948.2 753 L962.8 739 L967.4 743.2 Z" fill="#3c91e8"/>
<rect x="993.6" y="736.7" width="22.6" height="22.6" rx="6" fill="#4a8cff"/><rect x="998.2" y="744.2" width="9.4" height="7.6" rx="1.6" fill="#fff"/><path d="M1008.4 747 L1012 744.6 V751.4 L1008.4 749 Z" fill="#fff"/>
<path d="M1131.4 751.4 L1137.3 745 L1143.2 751.4" fill="none" stroke="#1b1b1b" stroke-width="1.4"/>
<path d="M1164.4 752.6 H1173.6 A3.4 3.4 0 0 0 1174 745.8 A5 5 0 0 0 1165 744.6 A4 4 0 0 0 1164.4 752.6 Z" fill="#b5b5b5" stroke="#2b2b2b" stroke-width="1.1"/>
<rect x="1197.6" y="744.3" width="10.6" height="7.4" rx="0.8" fill="#dfdfdf" stroke="#111" stroke-width="1.2"/><rect x="1199.4" y="745.9" width="7" height="4.2" fill="#111"/><rect x="1208.6" y="746.4" width="1.2" height="3.2" fill="#111"/><path d="M1194.5 742.3 V745 M1196.5 742.3 V745" stroke="#111" stroke-width="1"/><path d="M1193.2 745 H1197.8 V746.8 Q1197.8 748.6 1195.5 748.6 Q1193.2 748.6 1193.2 746.8 Z" fill="#111"/><path d="M1195.5 748.4 V752.8" stroke="#111" stroke-width="1.1"/>
<path d="M1224.6 745.6 H1227.4 L1231 742.2 V754 L1227.4 750.6 H1224.6 Z" fill="none" stroke="#1b1b1b" stroke-width="1.2"/><path d="M1233.4 745.6 A3.4 3.4 0 0 1 1233.4 750.6" fill="none" stroke="#1b1b1b" stroke-width="1.1"/><path d="M1235.6 743.6 A6 6 0 0 1 1235.6 752.6" fill="none" stroke="#8a8a8a" stroke-width="1"/><path d="M1237.8 741.8 A8.6 8.6 0 0 1 1237.8 754.4" fill="none" stroke="#b0b0b0" stroke-width="1"/>
<path d="M1325 740 H1341 V752.6 H1333.4 L1333 755.2 L1330 752.6 H1325 Z" fill="#000"/><path d="M1328 743.7 H1338.2 M1328 746.6 H1338.2 M1328 749.6 H1334" stroke="#e6e6e6" stroke-width="0.9"/>
<path d="M1361.5 728 V768" stroke="#a6a6a6" stroke-width="1"/>
<circle cx="1340.4" cy="754.9" r="7.6" fill="#dcdcdc" stroke="#4a4a4a" stroke-width="1"/>
</svg>
<span class="t" style="left:21.30px;top:8.50px;height:17px;line-height:17px;font-size:12.25px;color:#ffffff;letter-spacing:-0.416px;">AutoSave</span>
<span class="t" style="left:83.87px;top:10.00px;height:13px;line-height:13px;font-size:9.5px;color:#217346;letter-spacing:-0.585px;-webkit-text-stroke:0.35px #217346;">On</span>
<span class="t" style="left:325.80px;top:7.50px;height:17px;line-height:17px;font-size:12.25px;color:#ffffff;letter-spacing:-0.340px;">Assignment 5 (1)  -  Saved</span>
<span class="t" style="left:558.45px;top:8.50px;height:17px;line-height:17px;font-size:12.25px;color:#1e5c3b;letter-spacing:-0.697px;">Search</span>
<span class="t" style="left:1036.96px;top:9.50px;height:17px;line-height:17px;font-size:12.25px;color:#ffffff;letter-spacing:-0.391px;">Youseline I. Derose</span>
<span class="t" style="left:16.58px;top:40.50px;height:18px;line-height:18px;font-size:12.75px;color:#3b3a39;letter-spacing:-0.533px;">File</span>
<span class="t" style="left:131.78px;top:40.00px;height:19px;line-height:19px;font-size:13.5px;color:#3b3a39;letter-spacing:-0.167px;">Insert</span>
<span class="t" style="left:192.92px;top:40.00px;height:19px;line-height:19px;font-size:13.5px;color:#3b3a39;letter-spacing:-0.148px;">Draw</span>
<span class="t" style="left:252.96px;top:40.50px;height:18px;line-height:18px;font-size:13.0px;color:#3b3a39;letter-spacing:-0.095px;">Page Layout</span>
<span class="t" style="left:353.94px;top:40.00px;height:19px;line-height:19px;font-size:13.25px;color:#3b3a39;letter-spacing:-0.133px;">Formulas</span>
<span class="t" style="left:436.26px;top:40.50px;height:18px;line-height:18px;font-size:13.0px;color:#3b3a39;letter-spacing:-0.118px;">Data</span>
<span class="t" style="left:492.28px;top:40.50px;height:18px;line-height:18px;font-size:12.75px;color:#3b3a39;letter-spacing:-0.260px;">Review</span>
<span class="t" style="left:561.20px;top:40.50px;height:18px;line-height:18px;font-size:12.75px;color:#3b3a39;letter-spacing:-0.204px;">View</span>
<span class="t" style="left:615.22px;top:40.00px;height:19px;line-height:19px;font-size:13.5px;color:#3b3a39;letter-spacing:-0.141px;">Help</span>
<span class="t" style="left:67.62px;top:40.00px;height:19px;line-height:19px;font-size:13.5px;color:#323130;letter-spacing:0.581px;-webkit-text-stroke:0.55px #323130;">Home</span>
<span class="t" style="left:1201.80px;top:40.00px;height:19px;line-height:19px;font-size:13.25px;color:#185c37;letter-spacing:-0.196px;-webkit-text-stroke:0.35px #185c37;">Share</span>
<span class="t" style="left:1277.73px;top:40.00px;height:19px;line-height:19px;font-size:13.5px;color:#185c37;letter-spacing:0.168px;-webkit-text-stroke:0.35px #185c37;">Comments</span>
<span class="t" style="left:14.00px;top:143.50px;height:17px;line-height:17px;font-size:12px;color:#484644;letter-spacing:-0.030px;">Clipboard</span>
<span class="t" style="left:190.24px;top:143.50px;height:17px;line-height:17px;font-size:12px;color:#484644;letter-spacing:0.120px;">Font</span>
<span class="t" style="left:433.20px;top:143.50px;height:17px;line-height:17px;font-size:12.0px;color:#484644;letter-spacing:-0.130px;">Alignment</span>
<span class="t" style="left:656.56px;top:143.50px;height:16px;line-height:16px;font-size:11.75px;color:#484644;letter-spacing:-0.083px;">Number</span>
<span class="t" style="left:845.89px;top:144.00px;height:16px;line-height:16px;font-size:11.25px;color:#484644;letter-spacing:-0.391px;">Styles</span>
<span class="t" style="left:991.94px;top:144.00px;height:16px;line-height:16px;font-size:11.25px;color:#484644;letter-spacing:-0.294px;">Cells</span>
<span class="t" style="left:1103.84px;top:143.50px;height:17px;line-height:17px;font-size:12px;color:#484644;letter-spacing:0.087px;">Editing</span>
<span class="t" style="left:1205.20px;top:144.00px;height:16px;line-height:16px;font-size:11.25px;color:#484644;letter-spacing:-0.187px;">Analysis</span>
<span class="t" style="left:1267.68px;top:144.00px;height:16px;line-height:16px;font-size:11.5px;color:#484644;letter-spacing:-0.063px;">Sensitivity</span>
<span class="t" style="left:14.46px;top:104.50px;height:16px;line-height:16px;font-size:11.75px;color:#252423;letter-spacing:-0.203px;">Paste</span>
<span class="t" style="left:107.20px;top:79.50px;height:17px;line-height:17px;font-size:12px;color:#252423;letter-spacing:-0.045px;">Arial</span>
<span class="t" style="left:231.92px;top:79.50px;height:16px;line-height:16px;font-size:11.75px;color:#252423;letter-spacing:-0.350px;">10</span>
<span class="t" style="left:278.00px;top:74.00px;height:24px;line-height:24px;font-size:17.5px;color:#3b3a39;">A</span>
<span class="t" style="left:304.00px;top:78.00px;height:19px;line-height:19px;font-size:13.5px;color:#3b3a39;">A</span>
<span class="t" style="left:110.49px;top:110.00px;height:18px;line-height:18px;font-size:12.5px;color:#3b3a39;font-weight:bold;">B</span>
<span class="t" style="left:135.76px;top:110.00px;height:18px;line-height:18px;font-size:12.5px;color:#3b3a39;font-style:italic;font-family:'Liberation Serif',serif;font-size:14px;">I</span>
<span class="t" style="left:157.50px;top:109.50px;height:17px;line-height:17px;font-size:12px;color:#3b3a39;">U</span>
<span class="t" style="left:289.50px;top:106.00px;height:21px;line-height:21px;font-size:15px;color:#3b3a39;">A</span>
<span class="t" style="left:475.30px;top:76.50px;height:14px;line-height:14px;font-size:10px;color:#3b3a39;letter-spacing:1.000px;">ab</span>
<span class="t" style="left:475.80px;top:83.50px;height:14px;line-height:14px;font-size:10px;color:#3b3a39;">c</span>
<span class="t" style="left:492.20px;top:79.50px;height:16px;line-height:16px;font-size:11.75px;color:#252423;letter-spacing:-0.113px;">Wrap Text</span>
<span class="t" style="left:491.54px;top:111.50px;height:17px;line-height:17px;font-size:12px;color:#252423;letter-spacing:0.055px;">Merge &amp; Center</span>
<span class="t" style="left:619.22px;top:80.00px;height:16px;line-height:16px;font-size:11.5px;color:#252423;letter-spacing:-0.136px;">General</span>
<span class="t" style="left:622.40px;top:107.00px;height:24px;line-height:24px;font-size:17.5px;color:#3b3a39;transform:scaleX(0.8);transform-origin:0 50%;">$</span>
<span class="t" style="left:658.40px;top:106.50px;height:25px;line-height:25px;font-size:18px;color:#3b3a39;transform:scaleX(0.94);transform-origin:0 50%;">%</span>
<span class="t" style="left:685.80px;top:78.00px;height:56px;line-height:56px;font-size:40px;color:#3b3a39;font-weight:bold;font-family:'Liberation Serif',serif;">,</span>
<span class="t" style="left:723.60px;top:108.50px;height:13px;line-height:13px;font-size:9px;color:#3b3a39;">0</span>
<span class="t" style="left:714.39px;top:116.50px;height:13px;line-height:13px;font-size:9px;color:#3b3a39;letter-spacing:0.907px;">.00</span>
<span class="t" style="left:738.39px;top:108.50px;height:13px;line-height:13px;font-size:9px;color:#3b3a39;letter-spacing:0.707px;">.00</span>
<span class="t" style="left:743.59px;top:116.50px;height:13px;line-height:13px;font-size:9px;color:#3b3a39;letter-spacing:1.210px;">.0</span>
<span class="t" style="left:777.70px;top:104.50px;height:17px;line-height:17px;font-size:12px;color:#252423;letter-spacing:0.252px;">Conditional</span>
<span class="t" style="left:773.34px;top:120.50px;height:17px;line-height:17px;font-size:12px;color:#252423;letter-spacing:0.280px;">Formatting</span>
<span class="t" style="left:848.34px;top:104.50px;height:17px;line-height:17px;font-size:12.0px;color:#252423;letter-spacing:-0.165px;">Format as</span>
<span class="t" style="left:856.37px;top:121.00px;height:16px;line-height:16px;font-size:11.5px;color:#252423;letter-spacing:-0.174px;">Table</span>
<span class="t" style="left:916.80px;top:104.50px;height:17px;line-height:17px;font-size:12.0px;color:#252423;letter-spacing:-0.107px;">Cell</span>
<span class="t" style="left:905.58px;top:121.00px;height:16px;line-height:16px;font-size:11.5px;color:#252423;letter-spacing:-0.163px;">Styles</span>
<span class="t" style="left:987.32px;top:70.50px;height:17px;line-height:17px;font-size:12.0px;color:#252423;letter-spacing:-0.144px;">Insert</span>
<span class="t" style="left:987.86px;top:93.50px;height:16px;line-height:16px;font-size:11.75px;color:#252423;letter-spacing:-0.069px;">Delete</span>
<span class="t" style="left:987.84px;top:116.50px;height:17px;line-height:17px;font-size:12px;color:#252423;">Format</span>
<span class="t" style="left:1105.00px;top:69.00px;height:21px;line-height:21px;font-size:15px;color:#1e8bcd;">A</span>
<span class="t" style="left:1105.15px;top:83.00px;height:21px;line-height:21px;font-size:15px;color:#3b3a39;">Z</span>
<span class="t" style="left:1101.76px;top:104.50px;height:17px;line-height:17px;font-size:12px;color:#252423;letter-spacing:0.152px;">Sort &amp;</span>
<span class="t" style="left:1099.54px;top:120.50px;height:17px;line-height:17px;font-size:12.0px;color:#252423;letter-spacing:-0.072px;">Filter</span>
<span class="t" style="left:1144.54px;top:104.50px;height:17px;line-height:17px;font-size:12px;color:#252423;letter-spacing:0.300px;">Find &amp;</span>
<span class="t" style="left:1141.58px;top:121.00px;height:16px;line-height:16px;font-size:11.5px;color:#252423;letter-spacing:-0.139px;">Select</span>
<span class="t" style="left:1205.20px;top:104.50px;height:17px;line-height:17px;font-size:12.0px;color:#252423;letter-spacing:-0.213px;">Analyze</span>
<span class="t" style="left:1213.36px;top:120.50px;height:16px;line-height:16px;font-size:11.75px;color:#252423;letter-spacing:-0.237px;">Data</span>
<span class="t" style="left:1266.46px;top:104.50px;height:17px;line-height:17px;font-size:12.0px;color:#a19f9d;letter-spacing:-0.076px;">Sensitivity</span>
<span class="t" style="left:11.82px;top:176.50px;height:17px;line-height:17px;font-size:12px;color:#444;letter-spacing:-0.010px;">J20</span>
<span class="t" style="left:222.60px;top:173.00px;height:21px;line-height:21px;font-size:15px;color:#555;font-style:italic;font-family:'Liberation Serif',serif;">f</span>
<span class="t" style="left:227.60px;top:179.50px;height:14px;line-height:14px;font-size:10px;color:#555;font-style:italic;font-family:'Liberation Serif',serif;">x</span>
<span class="t" style="left:53.05px;top:206.00px;height:19px;line-height:19px;font-size:13.33px;color:#262626;">A</span>
<span class="t" style="left:117.05px;top:206.00px;height:19px;line-height:19px;font-size:13.33px;color:#262626;">B</span>
<span class="t" style="left:180.69px;top:206.00px;height:19px;line-height:19px;font-size:13.33px;color:#262626;">C</span>
<span class="t" style="left:295.69px;top:206.00px;height:19px;line-height:19px;font-size:13.33px;color:#262626;">D</span>
<span class="t" style="left:411.05px;top:206.00px;height:19px;line-height:19px;font-size:13.33px;color:#262626;">E</span>
<span class="t" style="left:475.43px;top:206.00px;height:19px;line-height:19px;font-size:13.33px;color:#262626;">F</span>
<span class="t" style="left:538.32px;top:206.00px;height:19px;line-height:19px;font-size:13.33px;color:#262626;">G</span>
<span class="t" style="left:602.69px;top:206.00px;height:19px;line-height:19px;font-size:13.33px;color:#262626;">H</span>
<span class="t" style="left:669.65px;top:206.00px;height:19px;line-height:19px;font-size:13.33px;color:#262626;">I</span>
<span class="t" style="left:732.17px;top:206.00px;height:19px;line-height:19px;font-size:13.33px;color:#217346;">J</span>
<span class="t" style="left:795.05px;top:206.00px;height:19px;line-height:19px;font-size:13.33px;color:#262626;">K</span>
<span class="t" style="left:859.79px;top:206.00px;height:19px;line-height:19px;font-size:13.33px;color:#262626;">L</span>
<span class="t" style="left:921.95px;top:206.00px;height:19px;line-height:19px;font-size:13.33px;color:#262626;">M</span>
<span class="t" style="left:986.69px;top:206.00px;height:19px;line-height:19px;font-size:13.33px;color:#262626;">N</span>
<span class="t" style="left:1050.32px;top:206.00px;height:19px;line-height:19px;font-size:13.33px;color:#262626;">O</span>
<span class="t" style="left:1115.05px;top:206.00px;height:19px;line-height:19px;font-size:13.33px;color:#262626;">P</span>
<span class="t" style="left:1178.32px;top:206.00px;height:19px;line-height:19px;font-size:13.33px;color:#262626;">Q</span>
<span class="t" style="left:1242.69px;top:206.00px;height:19px;line-height:19px;font-size:13.33px;color:#262626;">R</span>
<span class="t" style="left:1307.05px;top:206.00px;height:19px;line-height:19px;font-size:13.33px;color:#262626;">S</span>
<span class="t" style="left:9.29px;top:223.00px;height:19px;line-height:19px;font-size:13.33px;color:#262626;">1</span>
<span class="t" style="left:9.29px;top:240.00px;height:19px;line-height:19px;font-size:13.33px;color:#262626;">2</span>
<span class="t" style="left:9.29px;top:257.00px;height:19px;line-height:19px;font-size:13.33px;color:#262626;">3</span>
<span class="t" style="left:9.29px;top:274.00px;height:19px;line-height:19px;font-size:13.33px;color:#262626;">4</span>
<span class="t" style="left:9.29px;top:291.00px;height:19px;line-height:19px;font-size:13.33px;color:#262626;">5</span>
<span class="t" style="left:9.29px;top:308.00px;height:19px;line-height:19px;font-size:13.33px;color:#262626;">6</span>
<span class="t" style="left:9.29px;top:325.00px;height:19px;line-height:19px;font-size:13.33px;color:#262626;">7</span>
<span class="t" style="left:9.29px;top:342.00px;height:19px;line-height:19px;font-size:13.33px;color:#262626;">8</span>
<span class="t" style="left:9.29px;top:359.00px;height:19px;line-height:19px;font-size:13.33px;color:#262626;">9</span>
<span class="t" style="left:5.59px;top:376.00px;height:19px;line-height:19px;font-size:13.33px;color:#262626;">10</span>
<span class="t" style="left:6.08px;top:393.00px;height:19px;line-height:19px;font-size:13.33px;color:#262626;">11</span>
<span class="t" style="left:5.59px;top:410.00px;height:19px;line-height:19px;font-size:13.33px;color:#262626;">12</span>
<span class="t" style="left:5.59px;top:427.00px;height:19px;line-height:19px;font-size:13.33px;color:#262626;">13</span>
<span class="t" style="left:5.59px;top:444.00px;height:19px;line-height:19px;font-size:13.33px;color:#262626;">14</span>
<span class="t" style="left:5.59px;top:461.00px;height:19px;line-height:19px;font-size:13.33px;color:#262626;">15</span>
<span class="t" style="left:5.59px;top:478.00px;height:19px;line-height:19px;font-size:13.33px;color:#262626;">16</span>
<span class="t" style="left:5.59px;top:495.00px;height:19px;line-height:19px;font-size:13.33px;color:#262626;">17</span>
<span class="t" style="left:5.59px;top:512.00px;height:19px;line-height:19px;font-size:13.33px;color:#262626;">18</span>
<span class="t" style="left:5.59px;top:529.00px;height:19px;line-height:19px;font-size:13.33px;color:#262626;">19</span>
<span class="t" style="left:5.59px;top:546.00px;height:19px;line-height:19px;font-size:13.33px;color:#217346;">20</span>
<span class="t" style="left:5.59px;top:563.00px;height:19px;line-height:19px;font-size:13.33px;color:#262626;">21</span>
<span class="t" style="left:5.59px;top:580.00px;height:19px;line-height:19px;font-size:13.33px;color:#262626;">22</span>
<span class="t" style="left:5.59px;top:597.00px;height:19px;line-height:19px;font-size:13.33px;color:#262626;">23</span>
<span class="t" style="left:5.59px;top:614.00px;height:19px;line-height:19px;font-size:13.33px;color:#262626;">24</span>
<span class="t" style="left:5.59px;top:631.00px;height:19px;line-height:19px;font-size:13.33px;color:#262626;">25</span>
<span class="t" style="left:5.59px;top:648.00px;height:19px;line-height:19px;font-size:13.33px;color:#262626;">26</span>
<span class="t" style="left:5.59px;top:665.00px;height:19px;line-height:19px;font-size:13.33px;color:#262626;clip-path:inset(0 0 4px 0);">27</span>
<span class="t" style="left:28.23px;top:223.00px;height:19px;line-height:19px;font-size:13.33px;color:#000;letter-spacing:-0.039px;">Patient ID</span>
<span class="t" style="left:107.93px;top:223.00px;height:19px;line-height:19px;font-size:13.33px;color:#000;letter-spacing:0.070px;">LOS</span>
<span class="t" style="left:174.20px;top:223.00px;height:19px;line-height:19px;font-size:13.33px;color:#000;letter-spacing:-0.197px;">Age</span>
<span class="t" style="left:221.73px;top:223.00px;height:19px;line-height:19px;font-size:13.33px;color:#000;letter-spacing:-0.196px;">Gender (1=male; 2=female)</span>
<span class="t" style="left:79.69px;top:240.00px;height:19px;line-height:19px;font-size:13.33px;color:#000;">1</span>
<span class="t" style="left:143.69px;top:240.00px;height:19px;line-height:19px;font-size:13.33px;color:#000;">2</span>
<span class="t" style="left:200.27px;top:240.00px;height:19px;line-height:19px;font-size:13.33px;color:#000;">22</span>
<span class="t" style="left:373.69px;top:240.00px;height:19px;line-height:19px;font-size:13.33px;color:#000;">2</span>
<span class="t" style="left:79.69px;top:257.00px;height:19px;line-height:19px;font-size:13.33px;color:#000;">2</span>
<span class="t" style="left:143.69px;top:257.00px;height:19px;line-height:19px;font-size:13.33px;color:#000;">7</span>
<span class="t" style="left:200.27px;top:257.00px;height:19px;line-height:19px;font-size:13.33px;color:#000;">43</span>
<span class="t" style="left:373.69px;top:257.00px;height:19px;line-height:19px;font-size:13.33px;color:#000;">1</span>
<span class="t" style="left:79.69px;top:274.00px;height:19px;line-height:19px;font-size:13.33px;color:#000;">3</span>
<span class="t" style="left:143.69px;top:274.00px;height:19px;line-height:19px;font-size:13.33px;color:#000;">8</span>
<span class="t" style="left:200.27px;top:274.00px;height:19px;line-height:19px;font-size:13.33px;color:#000;">67</span>
<span class="t" style="left:373.69px;top:274.00px;height:19px;line-height:19px;font-size:13.33px;color:#000;">1</span>
<span class="t" style="left:79.69px;top:291.00px;height:19px;line-height:19px;font-size:13.33px;color:#000;">4</span>
<span class="t" style="left:143.69px;top:291.00px;height:19px;line-height:19px;font-size:13.33px;color:#000;">2</span>
<span class="t" style="left:200.27px;top:291.00px;height:19px;line-height:19px;font-size:13.33px;color:#000;">31</span>
<span class="t" style="left:373.69px;top:291.00px;height:19px;line-height:19px;font-size:13.33px;color:#000;">2</span>
<span class="t" style="left:79.69px;top:308.00px;height:19px;line-height:19px;font-size:13.33px;color:#000;">5</span>
<span class="t" style="left:143.69px;top:308.00px;height:19px;line-height:19px;font-size:13.33px;color:#000;">1</span>
<span class="t" style="left:200.27px;top:308.00px;height:19px;line-height:19px;font-size:13.33px;color:#000;">22</span>
<span class="t" style="left:373.69px;top:308.00px;height:19px;line-height:19px;font-size:13.33px;color:#000;">2</span>
<span class="t" style="left:79.69px;top:325.00px;height:19px;line-height:19px;font-size:13.33px;color:#000;">6</span>
<span class="t" style="left:136.27px;top:325.00px;height:19px;line-height:19px;font-size:13.33px;color:#000;">13</span>
<span class="t" style="left:200.27px;top:325.00px;height:19px;line-height:19px;font-size:13.33px;color:#000;">83</span>
<span class="t" style="left:373.69px;top:325.00px;height:19px;line-height:19px;font-size:13.33px;color:#000;">1</span>
<span class="t" style="left:79.69px;top:342.00px;height:19px;line-height:19px;font-size:13.33px;color:#000;">7</span>
<span class="t" style="left:136.27px;top:342.00px;height:19px;line-height:19px;font-size:13.33px;color:#000;">14</span>
<span class="t" style="left:200.27px;top:342.00px;height:19px;line-height:19px;font-size:13.33px;color:#000;">69</span>
<span class="t" style="left:373.69px;top:342.00px;height:19px;line-height:19px;font-size:13.33px;color:#000;">2</span>
<span class="t" style="left:79.69px;top:359.00px;height:19px;line-height:19px;font-size:13.33px;color:#000;">8</span>
<span class="t" style="left:143.69px;top:359.00px;height:19px;line-height:19px;font-size:13.33px;color:#000;">4</span>
<span class="t" style="left:200.27px;top:359.00px;height:19px;line-height:19px;font-size:13.33px;color:#000;">32</span>
<span class="t" style="left:373.69px;top:359.00px;height:19px;line-height:19px;font-size:13.33px;color:#000;">1</span>
<span class="t" style="left:79.69px;top:376.00px;height:19px;line-height:19px;font-size:13.33px;color:#000;">9</span>
<span class="t" style="left:143.69px;top:376.00px;height:19px;line-height:19px;font-size:13.33px;color:#000;">4</span>
<span class="t" style="left:200.27px;top:376.00px;height:19px;line-height:19px;font-size:13.33px;color:#000;">27</span>
<span class="t" style="left:373.69px;top:376.00px;height:19px;line-height:19px;font-size:13.33px;color:#000;">1</span>
<span class="t" style="left:72.27px;top:393.00px;height:19px;line-height:19px;font-size:13.33px;color:#000;">10</span>
<span class="t" style="left:143.69px;top:393.00px;height:19px;line-height:19px;font-size:13.33px;color:#000;">6</span>
<span class="t" style="left:200.27px;top:393.00px;height:19px;line-height:19px;font-size:13.33px;color:#000;">45</span>
<span class="t" style="left:373.69px;top:393.00px;height:19px;line-height:19px;font-size:13.33px;color:#000;">2</span>
<span class="t" style="left:73.26px;top:410.00px;height:19px;line-height:19px;font-size:13.33px;color:#000;">11</span>
<span class="t" style="left:143.69px;top:410.00px;height:19px;line-height:19px;font-size:13.33px;color:#000;">3</span>
<span class="t" style="left:200.27px;top:410.00px;height:19px;line-height:19px;font-size:13.33px;color:#000;">38</span>
<span class="t" style="left:373.69px;top:410.00px;height:19px;line-height:19px;font-size:13.33px;color:#000;">1</span>
<span class="t" style="left:72.27px;top:427.00px;height:19px;line-height:19px;font-size:13.33px;color:#000;">12</span>
<span class="t" style="left:143.69px;top:427.00px;height:19px;line-height:19px;font-size:13.33px;color:#000;">5</span>
<span class="t" style="left:200.27px;top:427.00px;height:19px;line-height:19px;font-size:13.33px;color:#000;">26</span>
<span class="t" style="left:373.69px;top:427.00px;height:19px;line-height:19px;font-size:13.33px;color:#000;">1</span>
<span class="t" style="left:72.27px;top:444.00px;height:19px;line-height:19px;font-size:13.33px;color:#000;">13</span>
<span class="t" style="left:143.69px;top:444.00px;height:19px;line-height:19px;font-size:13.33px;color:#000;">6</span>
<span class="t" style="left:200.27px;top:444.00px;height:19px;line-height:19px;font-size:13.33px;color:#000;">24</span>
<span class="t" style="left:373.69px;top:444.00px;height:19px;line-height:19px;font-size:13.33px;color:#000;">2</span>
<span class="t" style="left:72.27px;top:461.00px;height:19px;line-height:19px;font-size:13.33px;color:#000;">14</span>
<span class="t" style="left:136.27px;top:461.00px;height:19px;line-height:19px;font-size:13.33px;color:#000;">12</span>
<span class="t" style="left:200.27px;top:461.00px;height:19px;line-height:19px;font-size:13.33px;color:#000;">77</span>
<span class="t" style="left:373.69px;top:461.00px;height:19px;line-height:19px;font-size:13.33px;color:#000;">1</span>
<span class="t" style="left:72.27px;top:478.00px;height:19px;line-height:19px;font-size:13.33px;color:#000;">15</span>
<span class="t" style="left:143.69px;top:478.00px;height:19px;line-height:19px;font-size:13.33px;color:#000;">8</span>
<span class="t" style="left:200.27px;top:478.00px;height:19px;line-height:19px;font-size:13.33px;color:#000;">50</span>
<span class="t" style="left:373.69px;top:478.00px;height:19px;line-height:19px;font-size:13.33px;color:#000;">2</span>
<span class="t" style="left:72.27px;top:495.00px;height:19px;line-height:19px;font-size:13.33px;color:#000;">16</span>
<span class="t" style="left:143.69px;top:495.00px;height:19px;line-height:19px;font-size:13.33px;color:#000;">4</span>
<span class="t" style="left:200.27px;top:495.00px;height:19px;line-height:19px;font-size:13.33px;color:#000;">56</span>
<span class="t" style="left:373.69px;top:495.00px;height:19px;line-height:19px;font-size:13.33px;color:#000;">1</span>
<span class="t" style="left:72.27px;top:512.00px;height:19px;line-height:19px;font-size:13.33px;color:#000;">17</span>
<span class="t" style="left:143.69px;top:512.00px;height:19px;line-height:19px;font-size:13.33px;color:#000;">6</span>
<span class="t" style="left:200.27px;top:512.00px;height:19px;line-height:19px;font-size:13.33px;color:#000;">72</span>
<span class="t" style="left:373.69px;top:512.00px;height:19px;line-height:19px;font-size:13.33px;color:#000;">1</span>
<span class="t" style="left:72.27px;top:529.00px;height:19px;line-height:19px;font-size:13.33px;color:#000;">18</span>
<span class="t" style="left:143.69px;top:529.00px;height:19px;line-height:19px;font-size:13.33px;color:#000;">3</span>
<span class="t" style="left:200.27px;top:529.00px;height:19px;line-height:19px;font-size:13.33px;color:#000;">30</span>
<span class="t" style="left:373.69px;top:529.00px;height:19px;line-height:19px;font-size:13.33px;color:#000;">1</span>
<span class="t" style="left:72.27px;top:546.00px;height:19px;line-height:19px;font-size:13.33px;color:#000;">19</span>
<span class="t" style="left:143.69px;top:546.00px;height:19px;line-height:19px;font-size:13.33px;color:#000;">6</span>
<span class="t" style="left:200.27px;top:546.00px;height:19px;line-height:19px;font-size:13.33px;color:#000;">22</span>
<span class="t" style="left:373.69px;top:546.00px;height:19px;line-height:19px;font-size:13.33px;color:#000;">2</span>
<span class="t" style="left:72.27px;top:563.00px;height:19px;line-height:19px;font-size:13.33px;color:#000;">20</span>
<span class="t" style="left:143.69px;top:563.00px;height:19px;line-height:19px;font-size:13.33px;color:#000;">8</span>
<span class="t" style="left:200.27px;top:563.00px;height:19px;line-height:19px;font-size:13.33px;color:#000;">47</span>
<span class="t" style="left:373.69px;top:563.00px;height:19px;line-height:19px;font-size:13.33px;color:#000;">2</span>
<span class="t" style="left:72.27px;top:580.00px;height:19px;line-height:19px;font-size:13.33px;color:#000;">21</span>
<span class="t" style="left:143.69px;top:580.00px;height:19px;line-height:19px;font-size:13.33px;color:#000;">8</span>
<span class="t" style="left:200.27px;top:580.00px;height:19px;line-height:19px;font-size:13.33px;color:#000;">76</span>
<span class="t" style="left:373.69px;top:580.00px;height:19px;line-height:19px;font-size:13.33px;color:#000;">1</span>
<span class="t" style="left:72.27px;top:597.00px;height:19px;line-height:19px;font-size:13.33px;color:#000;">22</span>
<span class="t" style="left:143.69px;top:597.00px;height:19px;line-height:19px;font-size:13.33px;color:#000;">1</span>
<span class="t" style="left:200.27px;top:597.00px;height:19px;line-height:19px;font-size:13.33px;color:#000;">36</span>
<span class="t" style="left:373.69px;top:597.00px;height:19px;line-height:19px;font-size:13.33px;color:#000;">1</span>
<span class="t" style="left:72.27px;top:614.00px;height:19px;line-height:19px;font-size:13.33px;color:#000;">23</span>
<span class="t" style="left:143.69px;top:614.00px;height:19px;line-height:19px;font-size:13.33px;color:#000;">6</span>
<span class="t" style="left:200.27px;top:614.00px;height:19px;line-height:19px;font-size:13.33px;color:#000;">32</span>
<span class="t" style="left:373.69px;top:614.00px;height:19px;line-height:19px;font-size:13.33px;color:#000;">2</span>
<span class="t" style="left:72.27px;top:631.00px;height:19px;line-height:19px;font-size:13.33px;color:#000;">24</span>
<span class="t" style="left:143.69px;top:631.00px;height:19px;line-height:19px;font-size:13.33px;color:#000;">6</span>
<span class="t" style="left:200.27px;top:631.00px;height:19px;line-height:19px;font-size:13.33px;color:#000;">20</span>
<span class="t" style="left:373.69px;top:631.00px;height:19px;line-height:19px;font-size:13.33px;color:#000;">2</span>
<span class="t" style="left:72.27px;top:648.00px;height:19px;line-height:19px;font-size:13.33px;color:#000;">25</span>
<span class="t" style="left:143.69px;top:648.00px;height:19px;line-height:19px;font-size:13.33px;color:#000;">1</span>
<span class="t" style="left:200.27px;top:648.00px;height:19px;line-height:19px;font-size:13.33px;color:#000;">31</span>
<span class="t" style="left:373.69px;top:648.00px;height:19px;line-height:19px;font-size:13.33px;color:#000;">1</span>
<span class="t" style="left:72.27px;top:665.00px;height:19px;line-height:19px;font-size:13.33px;color:#000;clip-path:inset(0 0 4px 0);">26</span>
<span class="t" style="left:143.69px;top:665.00px;height:19px;line-height:19px;font-size:13.33px;color:#000;clip-path:inset(0 0 4px 0);">5</span>
<span class="t" style="left:200.27px;top:665.00px;height:19px;line-height:19px;font-size:13.33px;color:#000;clip-path:inset(0 0 4px 0);">28</span>
<span class="t" style="left:373.69px;top:665.00px;height:19px;line-height:19px;font-size:13.33px;color:#000;clip-path:inset(0 0 4px 0);">2</span>
<span class="t" style="left:111.82px;top:682.00px;height:19px;line-height:19px;font-size:13.5px;color:#217346;letter-spacing:-0.195px;font-weight:bold;">Data</span>
<span class="t" style="left:165.74px;top:683.00px;height:18px;line-height:18px;font-size:12.5px;color:#444;letter-spacing:-0.100px;">Sheet1</span>
<span class="t" style="left:230.73px;top:682.50px;height:18px;line-height:18px;font-size:12.75px;color:#444;letter-spacing:-0.214px;">Sheet2</span>
<span class="t" style="left:295.43px;top:682.50px;height:18px;line-height:18px;font-size:12.75px;color:#444;letter-spacing:-0.207px;">Sheet3</span>
<span class="t" style="left:7.40px;top:709.00px;height:16px;line-height:16px;font-size:11.25px;color:#444;letter-spacing:-0.228px;">Ready</span>
<span class="t" style="left:1330.96px;top:709.00px;height:16px;line-height:16px;font-size:11.25px;color:#444;letter-spacing:-0.554px;">100%</span>
<span class="t" style="left:88.00px;top:738.00px;height:21px;line-height:21px;font-size:15px;color:#2b2b2b;letter-spacing:-0.207px;">Type here to search</span>
<span class="t" style="left:769.40px;top:747.50px;height:17px;line-height:17px;font-size:12px;color:#111;">2</span>
<span class="t" style="left:799.30px;top:740.50px;height:15px;line-height:15px;font-size:10.5px;color:#fff;font-weight:bold;">X</span>
<span class="t" style="left:847.40px;top:741.50px;height:14px;line-height:14px;font-size:10px;color:#fff;font-weight:bold;">W</span>
<span class="t" style="left:1256.90px;top:730.50px;height:17px;line-height:17px;font-size:12px;color:#111;letter-spacing:-0.329px;">10:10 PM</span>
<span class="t" style="left:1254.46px;top:748.50px;height:17px;line-height:17px;font-size:12px;color:#111;letter-spacing:-0.115px;">4/29/2021</span>
<span class="t" style="left:1337.00px;top:746.50px;height:17px;line-height:17px;font-size:12px;color:#111;">6</span>
</body></html>
